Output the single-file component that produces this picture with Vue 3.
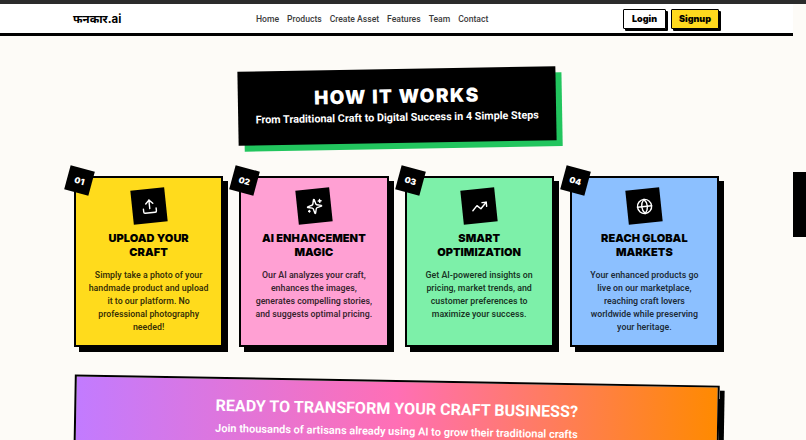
<template>
  <div class="page">
    <div class="topline"></div>
    <nav class="navbar">
      <div class="logo">फनकार.ai</div>
      <ul class="links">
        <li v-for="link in links" :key="link">{{ link }}</li>
      </ul>
      <div class="auth">
        <button class="btn">Login</button>
        <button class="btn signup">Signup</button>
      </div>
    </nav>

    <main class="content">
      <div class="heading">
        <h1>HOW IT WORKS</h1>
        <p>From Traditional Craft to Digital Success in 4 Simple Steps</p>
      </div>

      <div class="steps">
        <div v-for="step in steps" :key="step.num" class="step" :class="step.color">
          <span class="badge"><span>{{ step.num }}</span></span>
          <div class="icon-box">
            <svg viewBox="0 0 24 24" width="17" height="17" fill="none" stroke="#fff" stroke-width="2" stroke-linecap="round" stroke-linejoin="round">
              <path v-for="d in step.icon" :key="d" :d="d" />
            </svg>
          </div>
          <h3>{{ step.title }}</h3>
          <p>{{ step.text }}</p>
        </div>
      </div>

      <div class="cta">
        <h2>READY TO TRANSFORM YOUR CRAFT BUSINESS?</h2>
        <p>Join thousands of artisans already using AI to grow their traditional crafts</p>
      </div>
    </main>

    <div class="side-tab"></div>
  </div>
</template>

<script setup>
const links = ['Home', 'Products', 'Create Asset', 'Features', 'Team', 'Contact']

const steps = [
  {
    num: '01',
    color: 'yellow',
    title: 'UPLOAD YOUR CRAFT',
    text: 'Simply take a photo of your handmade product and upload it to our platform. No professional photography needed!',
    icon: ['M21 15v4a2 2 0 0 1-2 2H5a2 2 0 0 1-2-2v-4', 'M17 8l-5-5-5 5', 'M12 3v12']
  },
  {
    num: '02',
    color: 'pink',
    title: 'AI ENHANCEMENT MAGIC',
    text: 'Our AI analyzes your craft, enhances the images, generates compelling stories, and suggests optimal pricing.',
    icon: [
      'M9.94 15.5A2 2 0 0 0 8.5 14.06l-6.14-1.58a.5.5 0 0 1 0-.96L8.5 9.94A2 2 0 0 0 9.94 8.5l1.58-6.14a.5.5 0 0 1 .96 0L14.06 8.5A2 2 0 0 0 15.5 9.94l6.14 1.58a.5.5 0 0 1 0 .96L15.5 14.06a2 2 0 0 0-1.44 1.44l-1.58 6.14a.5.5 0 0 1-.96 0z',
      'M20 3v4',
      'M22 5h-4',
      'M4 17v2',
      'M5 18H3'
    ]
  },
  {
    num: '03',
    color: 'green',
    title: 'SMART OPTIMIZATION',
    text: 'Get AI-powered insights on pricing, market trends, and customer preferences to maximize your success.',
    icon: ['M22 7l-8.5 8.5-5-5L2 17', 'M16 7h6v6']
  },
  {
    num: '04',
    color: 'blue',
    title: 'REACH GLOBAL MARKETS',
    text: 'Your enhanced products go live on our marketplace, reaching craft lovers worldwide while preserving your heritage.',
    icon: [
      'M12 2a10 10 0 1 0 0 20a10 10 0 1 0 0-20z',
      'M12 2a14.5 14.5 0 0 0 0 20a14.5 14.5 0 0 0 0-20',
      'M2 12h20'
    ]
  }
]
</script>

<style>
html, body {
  margin: 0;
  height: 440px;
  overflow: hidden;
  background: #fdfbf7;
}
</style>

<style scoped>
.page {
  position: relative;
  height: 440px;
  overflow: hidden;
  font-family: Inter, "Noto Sans", sans-serif;
  color: #000;
}

.topline {
  height: 4px;
  background: #2b2b2b;
}

.navbar {
  width: 793px;
  height: 32px;
  box-sizing: border-box;
  padding: 0 74px 0 73px;
  background: #fff;
  border-bottom: 3px solid #000;
  display: flex;
  align-items: center;
  justify-content: space-between;
}

.logo {
  font-size: 11.5px;
  font-weight: 700;
  font-family: Inter, "Noto Sans", "Noto Sans Devanagari", "Lohit Devanagari", sans-serif;
}

.links {
  display: flex;
  gap: 8px;
  list-style: none;
  margin: 0;
  padding: 0;
  font-family: Roboto, sans-serif;
  font-size: 8.6px;
  font-weight: 500;
  color: #3c3c3c;
}

.auth {
  display: flex;
  gap: 5px;
}

.btn {
  width: 43px;
  height: 20px;
  padding: 0;
  background: #fff;
  border: 1.5px solid #000;
  border-radius: 1px;
  box-shadow: 2px 2px 0 #000;
  font-family: Inter, sans-serif;
  font-size: 9px;
  font-weight: 900;
  color: #000;
}

.signup {
  width: 48px;
  background: #ffd91e;
}

.content {
  width: 793px;
  box-sizing: border-box;
  padding: 33px 74px 0;
  display: flex;
  flex-direction: column;
  align-items: center;
}

.heading {
  width: 318px;
  height: 74px;
  box-sizing: border-box;
  padding-top: 16px;
  background: #000;
  color: #fff;
  text-align: center;
  transform: rotate(-1deg);
  box-shadow: 6px 6px 0 #22c55e;
}

.heading h1 {
  margin: 0;
  font-size: 19px;
  line-height: 24px;
  font-weight: 900;
  letter-spacing: 1.4px;
}

.heading p {
  margin: 2px 0 0;
  font-family: Roboto, sans-serif;
  font-size: 10.8px;
  line-height: 14px;
  font-weight: 700;
}

.steps {
  width: 100%;
  margin-top: 32.5px;
  display: grid;
  grid-template-columns: repeat(4, 1fr);
  gap: 16px;
}

.step {
  position: relative;
  height: 171.5px;
  box-sizing: border-box;
  padding: 11px 10px;
  border: 2px solid #000;
  box-shadow: 5px 5px 0 #000;
  display: flex;
  flex-direction: column;
  align-items: center;
  text-align: center;
}

.yellow { background: #ffdb1c; }
.pink { background: #ffa0d3; }
.green { background: #7df0a9; }
.blue { background: #8cc0ff; }

.badge {
  position: absolute;
  left: -9px;
  top: -10px;
  width: 25px;
  height: 25px;
  display: flex;
  align-items: center;
  justify-content: center;
  background: #000;
  color: #fff;
  font-size: 8.5px;
  font-weight: 900;
  transform: rotate(15deg);
}

.icon-box {
  width: 34px;
  height: 34px;
  flex-shrink: 0;
  display: flex;
  align-items: center;
  justify-content: center;
  background: #000;
  transform: rotate(-6deg);
}

.step h3 {
  margin: 8px 0 0;
  padding: 0 8px;
  font-size: 11px;
  line-height: 14px;
  font-weight: 900;
  letter-spacing: 0.05px;
}

.step p {
  margin: 10px 0 0;
  padding: 0 1.5px;
  font-family: Roboto, sans-serif;
  font-size: 8.8px;
  line-height: 13px;
  font-weight: 600;
  color: rgba(0, 0, 0, 0.8);
}

.cta {
  width: 100%;
  height: 90px;
  margin-top: 33px;
  flex-shrink: 0;
  box-sizing: border-box;
  padding-top: 17px;
  border: 2px solid #000;
  box-shadow: 5px 5px 0 #000;
  background: linear-gradient(90deg, #c27bff 0%, #ff6fb5 50%, #ff8a00 100%);
  color: #fff;
  text-align: center;
  transform: rotate(1deg);
}

.cta h2 {
  margin: 0;
  font-family: Roboto, sans-serif;
  font-size: 16px;
  line-height: 20px;
  font-weight: 700;
  letter-spacing: 0.05px;
}

.cta p {
  margin: 6px 0 0;
  font-family: Roboto, sans-serif;
  font-size: 11px;
  line-height: 14px;
  font-weight: 600;
}

.side-tab {
  position: absolute;
  right: 0;
  top: 172px;
  width: 13px;
  height: 65px;
  background: #000;
}
</style>
